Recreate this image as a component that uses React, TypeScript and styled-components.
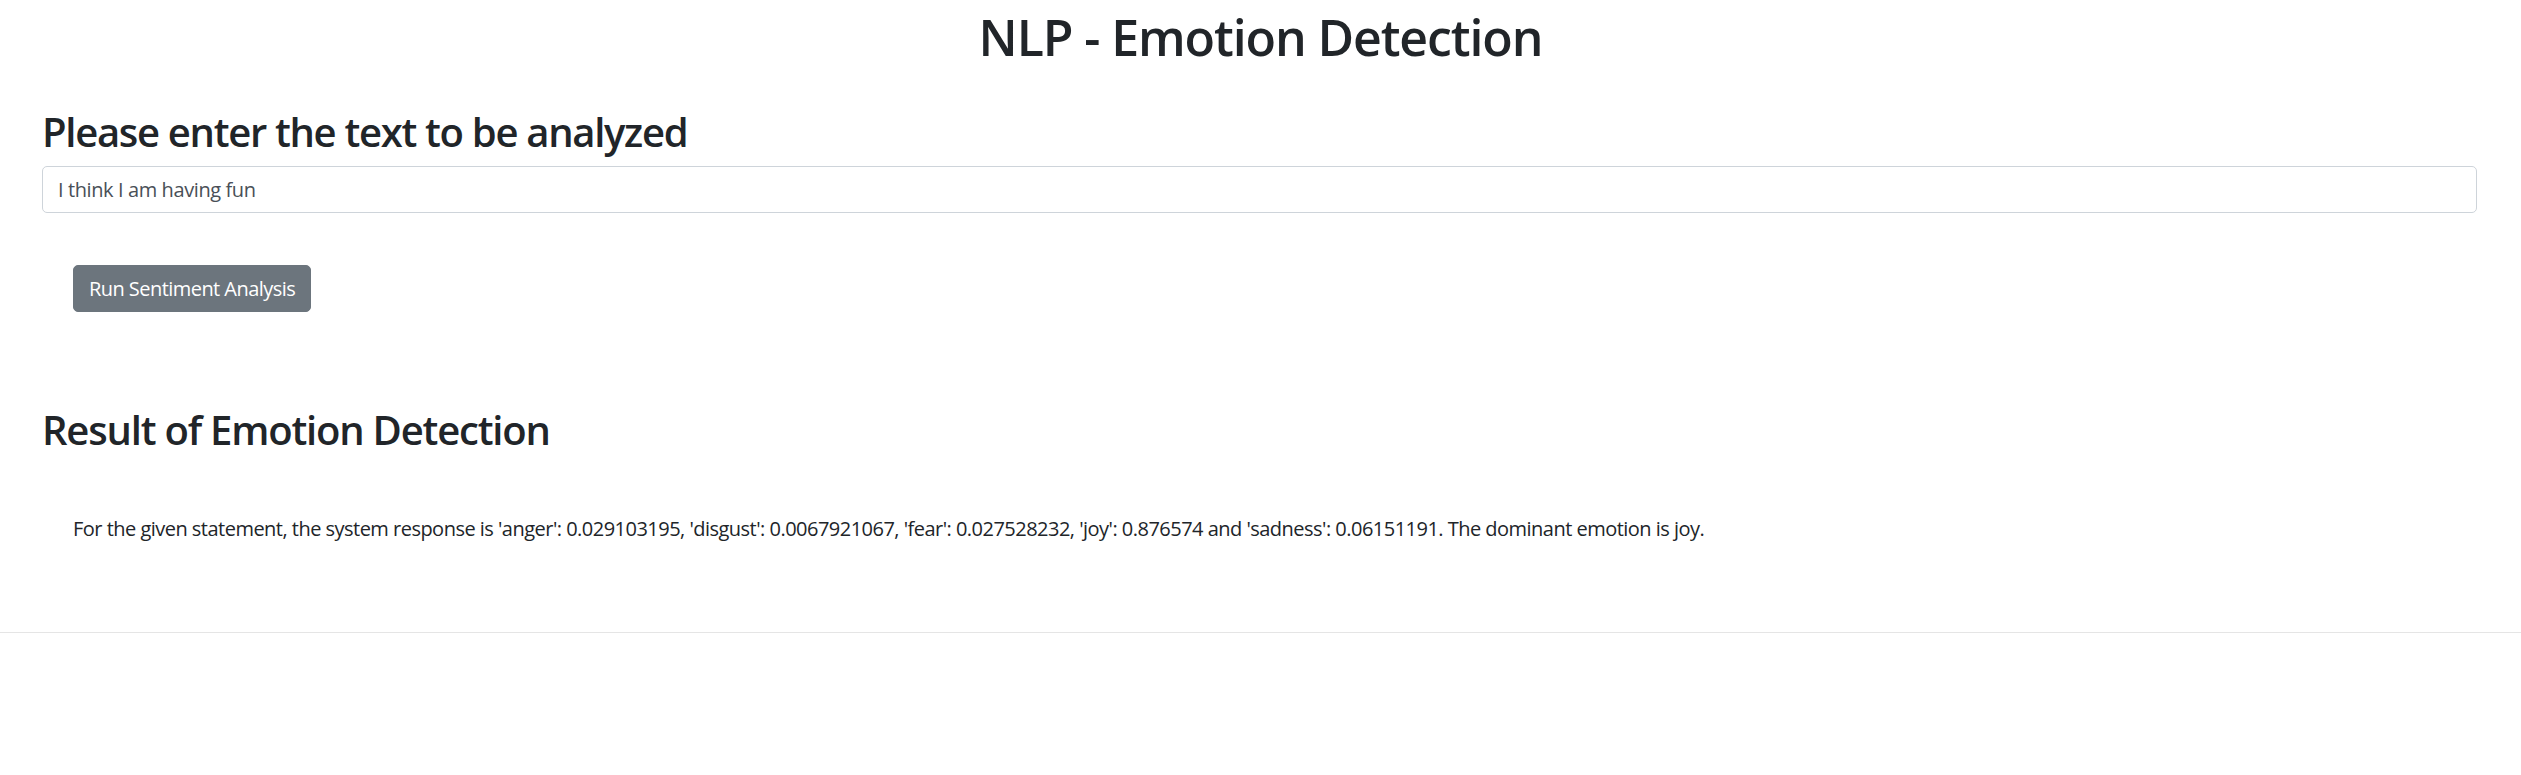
import React from "react";
import styled, { createGlobalStyle } from "styled-components";

const Global = createGlobalStyle`
  html, body { margin: 0; padding: 0; background: #fff; }
  body {
    font-family: "Open Sans", "Noto Sans", Arial, sans-serif;
    font-size: 20px;
    line-height: 1.5;
    color: #212529;
  }
  * { box-sizing: border-box; }
`;

const Page = styled.div`
  display: flex;
  flex-direction: column;
  padding-top: 7px;
`;

const Title = styled.h1`
  margin: 0 0 10px;
  font-size: 50px;
  line-height: 60px;
  font-weight: 600;
  text-align: center;
  letter-spacing: -1.1px;
`;

const Container = styled.div`
  display: flex;
  flex-direction: column;
  padding: 0 44px 0 42px;
`;

const Heading = styled.h2<{ $top: number; $tracking: number }>`
  margin: ${(p) => p.$top}px 0 10px;
  font-size: 40px;
  line-height: 48px;
  font-weight: 600;
  letter-spacing: ${(p) => p.$tracking}px;
`;

const TextInput = styled.input`
  display: block;
  width: 100%;
  height: 47px;
  padding: 7.5px 15px;
  font-family: inherit;
  font-size: 20px;
  line-height: 30px;
  color: #495057;
  background: #fff;
  border: 1px solid #ced4da;
  border-radius: 5px;
  letter-spacing: -0.4px;
  outline: none;
`;

const Indented = styled.div<{ $top: number }>`
  display: flex;
  padding-left: 31px;
  margin-top: ${(p) => p.$top}px;
`;

const Button = styled.button`
  height: 47px;
  padding: 7.5px 15px;
  font-family: inherit;
  font-size: 20px;
  line-height: 30px;
  color: #fff;
  background: #6c757d;
  border: 1px solid #6c757d;
  border-radius: 5px;
  letter-spacing: -0.55px;
  cursor: pointer;
`;

const Result = styled.p`
  margin: 0;
  font-size: 20px;
  line-height: 30px;
  letter-spacing: -0.52px;
`;

const Rule = styled.hr`
  width: 100%;
  margin: 88px 0 0;
  border: 0;
  border-top: 1px solid rgba(0, 0, 0, 0.1);
`;

export default function App() {
  return (
    <>
      <Global />
      <Page>
        <Title>NLP - Emotion Detection</Title>
        <Container>
          <Heading $top={31} $tracking={-1.3}>
            Please enter the text to be analyzed
          </Heading>
          <TextInput type="text" defaultValue="I think I am having fun" />
          <Indented $top={52}>
            <Button type="button">Run Sentiment Analysis</Button>
          </Indented>
          <Heading $top={94} $tracking={-1.2}>
            Result of Emotion Detection
          </Heading>
          <Indented $top={50}>
            <Result>
              For the given statement, the system response is 'anger': 0.029103195, 'disgust': 0.0067921067, 'fear': 0.027528232, 'joy': 0.876574 and 'sadness': 0.06151191. The dominant emotion is joy.
            </Result>
          </Indented>
        </Container>
        <Rule />
      </Page>
    </>
  );
}
